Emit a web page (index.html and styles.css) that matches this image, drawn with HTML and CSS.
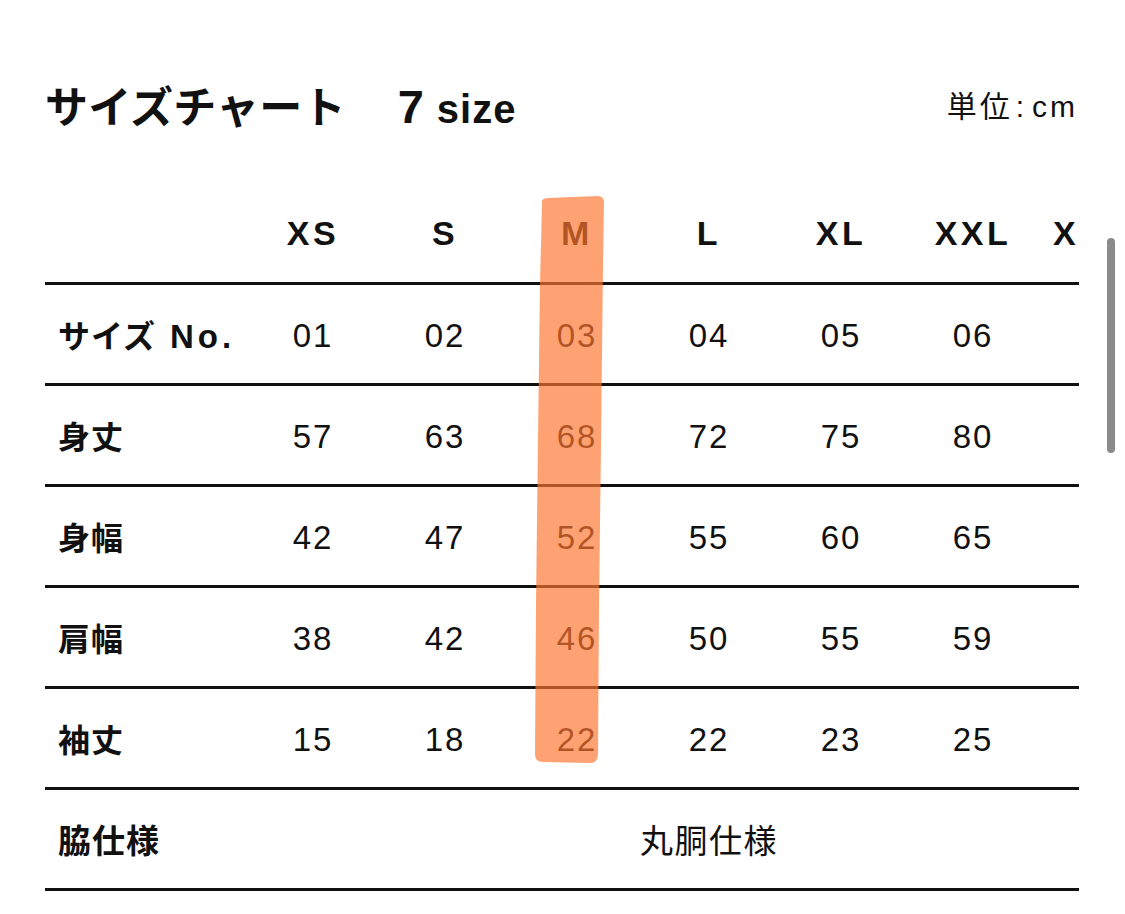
FILE: index.html
```html
<!DOCTYPE html>
<html lang="ja">
<head>
<meta charset="utf-8">
<title>サイズチャート</title>
<link rel="stylesheet" href="styles.css">
</head>
<body>
<div class="page">
  <header class="head">
    <h1 class="title"><span class="title-jp">サイズチャート</span><span class="title-num">7</span><span class="title-size">size</span></h1>
    <div class="unit">単位<span class="unit-colon">:</span>cm</div>
  </header>
  <div class="chart">
    <div class="scroll">
      <table class="sizes">
        <colgroup><col class="c-label"><col class="c-val"><col class="c-val"><col class="c-val"><col class="c-val"><col class="c-val"><col class="c-val"><col class="c-val"></colgroup>
        <thead>
          <tr><th></th><th>XS</th><th>S</th><th>M</th><th>L</th><th>XL</th><th>XXL</th><th class="edge">X</th></tr>
        </thead>
        <tbody>
          <tr><th>サイズ <span class="latin">No.</span></th><td>01</td><td>02</td><td>03</td><td>04</td><td>05</td><td>06</td><td></td></tr>
          <tr><th>身丈</th><td>57</td><td>63</td><td>68</td><td>72</td><td>75</td><td>80</td><td></td></tr>
          <tr><th>身幅</th><td>42</td><td>47</td><td>52</td><td>55</td><td>60</td><td>65</td><td></td></tr>
          <tr><th>肩幅</th><td>38</td><td>42</td><td>46</td><td>50</td><td>55</td><td>59</td><td></td></tr>
          <tr><th>袖丈</th><td>15</td><td>18</td><td>22</td><td>22</td><td>23</td><td>25</td><td></td></tr>
          <tr><th class="wide">脇仕様</th><td class="span" colspan="7">丸胴仕様</td></tr>
        </tbody>
      </table>
    </div>
    <svg class="marker" width="80" height="575" viewBox="0 0 80 575" aria-hidden="true">
      <path d="M12 9 Q11 4 18 4 L68 2 Q74 2 74 9 L73 70 L71 250 L69 410 L68 560 Q68 569 60 569 L13 568 Q5 568 5 560 L6 410 L8 245 L10 90 Z" />
    </svg>
  </div>
  <div class="scrollbar"></div>
</div>
</body>
</html>
```

FILE: styles.css
```css
html, body {
  margin: 0;
  padding: 0;
  background: #ffffff;
}

body {
  font-family: "Liberation Sans", "Noto Sans CJK JP", sans-serif;
  color: #111111;
}

.page {
  position: relative;
  width: 1125px;
  height: 914px;
  overflow: hidden;
}

.head {
  display: flex;
  justify-content: space-between;
  align-items: flex-start;
  padding: 83px 47px 0 45px;
  height: 184px;
  box-sizing: border-box;
}

.title {
  margin: 0;
  font-weight: 700;
  line-height: 1;
  display: flex;
  align-items: baseline;
}

.title-jp {
  font-family: "Noto Sans CJK JP", sans-serif;
  font-size: 43px;
  letter-spacing: 0.2px;
}

.title-num {
  font-family: "Liberation Sans", sans-serif;
  font-size: 47px;
  margin-left: 52px;
}

.title-size {
  font-family: "Liberation Sans", sans-serif;
  font-size: 40px;
  margin-left: 13px;
  letter-spacing: 1px;
}

.unit {
  font-family: "Liberation Sans", "Noto Sans CJK JP", sans-serif;
  font-size: 30px;
  letter-spacing: 3px;
  line-height: 1;
  margin-top: 9px;
}

.unit-colon {
  margin: 0 5px 0 3px;
}

.chart {
  position: relative;
}

.scroll {
  margin-left: 45px;
  width: 1034px;
  overflow: hidden;
}

.sizes {
  table-layout: fixed;
  width: 1126px;
  border-collapse: separate;
  border-spacing: 0;
}

.c-label { width: 202px; }
.c-val { width: 132px; }

.sizes th,
.sizes td {
  height: 98px;
  padding: 0;
  border-bottom: 3px solid #111111;
  text-align: center;
  vertical-align: middle;
  white-space: nowrap;
}

.sizes thead th {
  font-size: 34px;
  font-weight: 700;
  letter-spacing: 3.5px;
}

.sizes thead th.edge {
  text-align: left;
  padding-left: 14px;
}

.sizes tbody th {
  text-align: left;
  padding-left: 13px;
  font-size: 32px;
  font-weight: 700;
  letter-spacing: 1px;
}

.sizes tbody th .latin {
  font-size: 33px;
  letter-spacing: 4px;
  margin-left: 4px;
}

.sizes tbody th.wide {
  font-size: 33px;
}

.sizes tbody td {
  height: 95px;
  padding-top: 3px;
  font-size: 33px;
  font-weight: 400;
  letter-spacing: 2px;
}

.sizes tbody td.span {
  height: 98px;
  padding-top: 0;
  font-family: "Noto Sans CJK JP", sans-serif;
  font-size: 33px;
  letter-spacing: 1.5px;
}

.marker {
  position: absolute;
  left: 530px;
  top: 10px;
}

.marker path {
  fill: #ff7630;
  opacity: 0.68;
}

.scrollbar {
  position: absolute;
  left: 1107px;
  top: 238px;
  width: 8px;
  height: 215px;
  border-radius: 4px;
  background: #8a8a8a;
}
```
